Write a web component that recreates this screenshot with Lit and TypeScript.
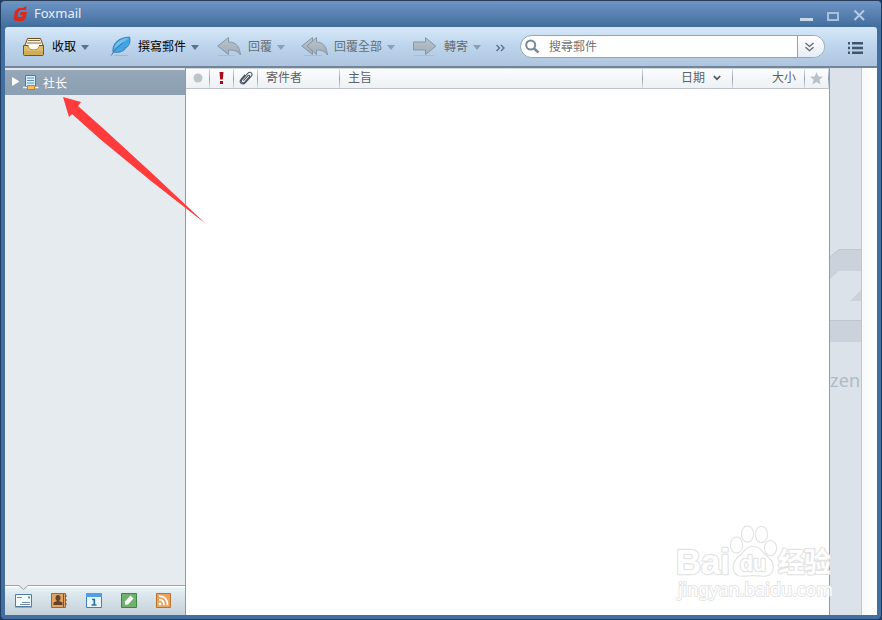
import { LitElement, html, svg, css } from "lit";
import { customElement } from "lit/decorators.js";

const inbox = html`<svg width="29" height="24" viewBox="0 0 29 24">
  <path d="M4.500 3.500h13l3 8v3h-19v-3z" fill="#fbf6e8" stroke="#6d4b1c"/>
  <path d="M5 5.500h12M4 8h14" stroke="#7c6340" stroke-width=".9"/>
  <path d="M.5 10.500h5.200c.6 3 1.600 4 5 4s4.700-1 5.300-4h4.500v9q0 1-1 1h-18q-1 0-1-1z" fill="#dfbd68" stroke="#79531f"/>
  <path d="M5.500 10h10.500c-.5 3.500-2 4.500-5.200 4.500S6 13.500 5.500 10z" fill="#fffdf5"/>
  <path d="M1 16h19v4H1z" fill="#bd9341" opacity=".4"/></svg>`;
const feather = html`<svg width="28" height="24" viewBox="0 0 28 24">
  <path d="M4 20.500h14" stroke="#8fa6bd" opacity=".6"/>
  <path d="M3 17C2 9 8 2.500 19.500 2c1.500 5-.5 8.500-3 10.500l-2 .5 1 .7C12.500 17 8 18 3 17z" fill="#45a5e0" stroke="#2c72ae" stroke-width=".8"/>
  <path d="M4 14C5.500 8 10.500 3.500 18.500 3c-3 3-9 6-14.500 11z" fill="#74c0ef"/>
  <path d="M1.200 20.500C4 15.500 8.500 11 13.500 7.500" fill="none" stroke="#2d7ab5"/></svg>`;
const fade = svg`<linearGradient id="g" x2="0" y2="1"><stop stop-color="#bcc5cd"/><stop offset="1" stop-color="#9eabb6"/></linearGradient>`;
const reply = html`<svg width="31" height="24" viewBox="0 0 31 24"><defs>${fade}</defs>
  <path d="M1 20.500h17" stroke="#9cafc1" opacity=".5"/>
  <path d="M.8 11L11.500 2.500v4.500c7 0 11 4 12 13-3-4-6-5-12-5v4.500z" fill="url(#g)" stroke="#8797a5"/></svg>`;
const replyAll = html`<svg width="33" height="24" viewBox="0 0 33 24"><defs>${fade}</defs>
  <path d="M3 20.500h18" stroke="#9cafc1" opacity=".5"/>
  <path d="M.8 11L11.500 2.500v4L6 11l5.500 4.500v4z" fill="url(#g)" stroke="#8797a5"/>
  <path d="M6 11l9.500-8.500V7c6 0 10 4 11 13-3-4-6-5-11-5v4.500z" fill="url(#g)" stroke="#8797a5"/></svg>`;
const forward = html`<svg width="32" height="24" viewBox="0 0 32 24"><defs>${fade}</defs>
  <path d="M2 20.500h20" stroke="#9cafc1" opacity=".5"/>
  <path d="M1.500 7h12V2.700l10.300 8.500-10.300 8.300V15h-12z" fill="url(#g)" stroke="#8797a5"/></svg>`;

const actions = [
  { icon: inbox, label: "收取", size: "w87", on: true },
  { icon: feather, label: "撰寫郵件", size: "w107", on: true },
  { icon: reply, label: "回覆", size: "w84", on: false },
  { icon: replyAll, label: "回覆全部", size: "w111", on: false },
  { icon: forward, label: "轉寄", size: "w84", on: false },
];

const tabs = [
  svg`<path d="M.5 2.500h16v12H.5z" fill="#f4f9fc" stroke="#557da4"/><path d="M0 15.500h17" stroke="#9eabb5"/><path d="M2 5.500h5M7 10.500h8M5 12.500h10" stroke="#7392ad"/><path d="M13 4.500h2v2h-2z" fill="#4f9f91"/>`,
  svg`<path d="M1.500 1.500h14v14h-14z" fill="#e1a467" stroke="#a56428"/><path d="M13.500 2v13" stroke="#895027"/><path d="M15 4h1.500m-1.500 4h1.500m-1.500 4h1.500" stroke="#8c5930" stroke-width="2"/><ellipse cx="8" cy="6" rx="2.500" ry="3" fill="#67422a"/><path d="M3.500 13v-2.500L7 9V7h2v2l3.500 1.500V13z" fill="#67422a"/>`,
  svg`<path d="M1.500 1.500h15v14h-15z" fill="#e9f6fd" stroke="#3e84b8"/><path d="M1 1h16v4H1z" fill="#4e9eec"/><path d="M7 7.500h2.300V13M6.500 13h5" fill="none" stroke="#28739c" stroke-width="1.700"/>`,
  svg`<path d="M1.500 1.500h15v14h-15z" fill="#70b16d" stroke="#3b8546"/><path d="M5 12.700V9.500l5.500-6 3 3-5.500 6z" fill="#fff"/>`,
  svg`<path d="M1.500 1.500h14v14h-14z" fill="#e9a461" stroke="#b8742f"/><circle cx="5" cy="12" r="1.400" fill="#fff"/><path d="M4 7.700q5 0 5 5.500M4 4.200q8.500 0 8.500 9" fill="none" stroke="#fff" stroke-width="1.700"/>`,
];

@customElement("app-root")
export class AppRoot extends LitElement {
  static styles = css`
    :host { display: block; width: 882px; height: 620px; position: relative; overflow: hidden; background: #203e61;
      font: 12px/16px "Liberation Sans", "Noto Sans CJK TC", sans-serif; color: #5c6368; }
    * { box-sizing: border-box; }
    svg { display: block; flex: none; }
    .window { height: 620px; display: flex; flex-direction: column; border: 1px solid #203e61; border-top: 1px solid #283c57; border-radius: 5px;
      background: #426f9f; padding: 0 4px 4px; overflow: hidden; }
    .title { height: 26px; flex: none; margin: 0 -4px; padding: 0 15px 0 12px; display: flex; align-items: center;
      background: linear-gradient(#6e95c4, #426e9e); color: #e7eef6; font: 13px/22px "Noto Sans", sans-serif; }
    .title span { flex: 1; margin-left: 6px; padding-bottom: 3px; }
    .logo { margin-top: -2px; }
    .controls { margin-top: -3px; }
    .bar { height: 41px; flex: none; display: flex; align-items: center; padding: 0 14px 0 18px; border-radius: 3px 3px 0 0;
      background: linear-gradient(#d7e9f9, #bcd4ec 50%, #afc5df); border-bottom: 2px solid #71859b; }
    .action { display: flex; align-items: center; color: #666d74; flex: none; }
    .action span { padding-top: 1px; }
    .on { color: #000; }
    .w87 { width: 87px; } .w107 { width: 107px; } .w84 { width: 84px; } .w111 { width: 111px; }
    .caret { margin-left: 5px; border: 4px solid transparent; border-top: 5px solid #8b9fb2; border-bottom: 0; margin-top: 2px; }
    .on .caret { border-top-color: #5c738a; }
    .more { width: 24px; flex: none; margin-top: 1px; }
    .search { width: 305px; height: 23px; flex: none; display: flex; align-items: center; border: 1px solid #90a5b5; border-radius: 12px; background: #fff; overflow: hidden; padding-left: 4px; }
    .search span { flex: 1; margin-left: 9px; color: #737373; }
    .drop { width: 27px; height: 21px; border-left: 1px solid #90a5b5; background: linear-gradient(#fff, #e6edf6); padding: 6px 0 0 7px; }
    .menu { margin: 2px -1px 0 auto; }
    .body { flex: 1; min-height: 0; display: flex; background: #fff; }
    .side { width: 181px; display: flex; flex-direction: column; border-right: 1px solid #8f9aa4; background: #e5ebef; }
    .account { height: 27px; flex: none; border-top: 2px solid #e2e7eb; background: linear-gradient(#95a6b7, #8ba0b2); color: #fff; display: flex; align-items: center; padding-left: 7px; font-family: "Noto Sans CJK SC", sans-serif; }
    .account span { margin-left: 4px; }
    .tabs { height: 30px; margin-top: auto; position: relative; border-top: 1px solid #98a9ad; background: linear-gradient(#fff 0 1px, #e5f0f5 2px, #c4cfd7); display: flex; padding: 6px 0 0 10px; gap: 18px; }
    .notch { position: absolute; left: 13px; top: -1px; }
    .list { width: 643px; background: #fff; }
    .head { height: 21px; display: flex; border-top: 1px solid #d0d6dc; border-bottom: 1px solid #bec4ca; background: linear-gradient(#fbfcfd, #edf1f5); }
    .cell { display: flex; align-items: center; height: 19px; border-right: 1px solid; border-image: linear-gradient(#e2e7ec, #91a0af 50%, #e2e7ec) 1; padding: 0 0 2px 8px; flex: none; }
    .c24 { width: 24px; padding: 0 0 1px 0; justify-content: center; }
    .c82 { width: 82px; } .c303 { width: 303px; } .c90 { width: 90px; padding-left: 38px; } .c72 { width: 72px; padding-left: 39px; }
    .date { margin-left: 8px; }
    .preview { width: 33px; border: solid #8f9ba7; border-width: 0 1px; border-right-color: #c0c6cc; background: #dbe2e9; overflow: hidden; padding-top: 179px; }
    .zen { font: 18px/26px "Noto Sans", sans-serif; color: #afbbc7; margin-top: 24px; letter-spacing: .2px; }
    .edge { flex: 1; background: linear-gradient(90deg, #f8faf9, #fff); }
    .overlay { position: absolute; left: 0; top: 0; pointer-events: none; }
    .mark { fill: #fff; stroke: #e0e0e0; stroke-width: 2.4px; paint-order: stroke; stroke-linejoin: round; opacity: .85; }
    .brand { font: bold 35px "Liberation Sans", sans-serif; }
    .du { font: bold 22px "Liberation Sans", sans-serif; }
    .cn { font: bold 27px "Noto Sans CJK SC", sans-serif; }
    .url { font: 18px "Noto Sans", sans-serif; stroke-width: 1.8px; }
  `;

  render() {
    return html`
      <div class="window">
        <div class="title">
          <svg class="logo" width="15" height="17" viewBox="0 0 15 17"><path d="M13.500 1L13 5H8L5.500 6.500 4.500 12h4.500l.7-2H7l.8-3H14l-1.500 6.500-2.500 2.500H2L.5 13.500 2 6l3.500-3H10z" fill="#d92a1c"/></svg>
          <span>Foxmail</span>
          <svg class="controls" width="66" height="16" viewBox="0 0 66 16"><path d="M0 13h13v3H0z" fill="#c8d9ea"/><path d="M28 8h10v7H28z" fill="none" stroke="#a7c1dd" stroke-width="2"/><path d="M54.500 5.500l9.500 9.500m0-9.500l-9.500 9.500" stroke="#b5cae1" stroke-width="2"/></svg>
        </div>
        <div class="bar">
          ${actions.map((a) => html`<div class="action ${a.size} ${a.on ? "on" : ""}">${a.icon}<span>${a.label}</span><i class="caret"></i></div>`)}
          <svg class="more" width="24" height="12" viewBox="0 0 24 12"><path d="M.5 4l3 3-3 3m4.500-6l3 3-3 3" fill="none" stroke="#566f89" stroke-width="1.300"/></svg>
          <div class="search">
            <svg width="15" height="15" viewBox="0 0 15 15"><circle cx="5.700" cy="6" r="4.500" fill="none" stroke="#77899a" stroke-width="2"/><path d="M9 9.500l4.500 4" stroke="#77899a" stroke-width="2.500"/></svg>
            <span>搜尋郵件</span>
            <div class="drop"><svg width="9" height="10" viewBox="0 0 9 10"><path d="M.5 1l4 3.500 4-3.500M.5 5.200l4 3.500 4-3.500" fill="none" stroke="#5e6871" stroke-width="1.300"/></svg></div>
          </div>
          <svg class="menu" width="16" height="12" viewBox="0 0 16 12"><path d="M0 1.200h2m2 0h11M0 6h2m2 0h11M0 10.800h2m2 0h11" stroke="#40566c" stroke-width="2.500"/></svg>
        </div>
        <div class="body">
          <div class="side">
            <div class="account">
              <svg width="8" height="11" viewBox="0 0 8 11"><path d="M0 0v9l7.500-4.500z" fill="#fff"/></svg>
              <svg width="19" height="16" viewBox="-2 0 19 16"><path d="M3.500.5h10v11h-10z" fill="#d9eefb" stroke="#4a7da4"/><path d="M5 3h7M5 5.500h7M5 8h7" stroke="#5a90b4"/><path d="M1 12.500h15.500" stroke="#edf2f5" stroke-width="1.500"/><path d="M5.500 10.500h7v4h-7z" fill="#f9bd62" stroke="#c77c28"/></svg>
              <span>社长</span>
            </div>
            <div class="tabs">
              <svg class="notch" width="11" height="7" viewBox="0 0 11 7"><path d="M0 0l5.500 5L11 0z" fill="#e5ebef"/><path d="M0 .5h1l4.500 4 4.500-4h1" fill="none" stroke="#91a3a8"/></svg>
              ${tabs.map((t) => html`<svg width="17" height="17" viewBox="0 0 17 17">${t}</svg>`)}
            </div>
          </div>
          <div class="list">
            <div class="head">
              <div class="cell c24"><svg width="10" height="10"><circle cx="5" cy="5" r="4.500" fill="#bdc4ca"/></svg></div>
              <div class="cell c24"><svg width="5" height="12" viewBox="0 0 5 12"><path d="M.5 0h4l-.7 7.500H1.200zM1 9h3v3H1z" fill="#a80b17"/></svg></div>
              <div class="cell c24"><svg width="14" height="14" viewBox="0 0 14 14"><path d="M4.300 9.600l4.700-5c1-1 2.300.2 1.300 1.300L5.700 11c-2 2-4.700 0-2.700-2.300l5.800-6.300c2.500-2.600 5.600.3 3.500 2.800l-5.800 6.400c-2.800 3-7.300 0-4.500-3.300l4-4.600" fill="none" stroke="#4b555f" stroke-width="1.050"/></svg></div>
              <div class="cell c82">寄件者</div>
              <div class="cell c303">主旨</div>
              <div class="cell c90">日期<svg class="date" width="8" height="6" viewBox="0 0 8 6"><path d="M.8 1L4 4.200 7.200 1" fill="none" stroke="#4e5861" stroke-width="1.700"/></svg></div>
              <div class="cell c72">大小</div>
              <div class="cell c24"><svg width="13" height="13" viewBox="0 0 13 13"><path d="M6.500 0l1.800 4.500 4.700.3-3.600 3 1.200 4.700-4.100-2.600-4.100 2.600 1.200-4.700L0 4.800l4.700-.3z" fill="#b8c1ca"/></svg></div>
            </div>
          </div>
          <div class="preview">
            <svg width="31" height="96" viewBox="0 0 31 96"><path d="M0 10l9-8h22v22H9l-9 8zM20 54l11-11v11zM0 73h31v22H0z" fill="#cbd2dc"/><path d="M0 10l9-7.500h22M0 73.500h31" fill="none" stroke="#bec7d0"/></svg>
            <div class="zen">zen</div>
          </div>
          <div class="edge"></div>
        </div>
      </div>
      <svg class="overlay" width="882" height="620" viewBox="0 0 882 620">
        <path d="M63 97l18 5-3 4 28 25 50 46 50 47-55-43-51-42-28-25-3 3z" fill="#ff3b3b"/>
        <g class="mark">
          <ellipse cx="736.500" cy="545" rx="5.500" ry="7.500"/><ellipse cx="747.500" cy="534" rx="5.500" ry="7.500"/><ellipse cx="761.500" cy="534.500" rx="5.500" ry="7.500"/><ellipse cx="770.500" cy="548" rx="5.500" ry="7"/>
          <path d="M753 547c7 0 9 6 14 10 10 8 6 20-5 18.500-6-.7-12-.7-18 0-11 1.500-14-10.500-5-18.500 5-4 7-10 14-10z"/>
          <text class="brand" x="676" y="574" textLength="54" lengthAdjust="spacingAndGlyphs">Bai</text>
          <text class="du" x="740" y="571" textLength="26" lengthAdjust="spacingAndGlyphs">du</text>
          <text class="cn" x="778" y="572" textLength="53">经验</text>
          <text class="url" x="678" y="596" textLength="155" lengthAdjust="spacingAndGlyphs">jingyan.baidu.com</text>
        </g>
      </svg>`;
  }
}
